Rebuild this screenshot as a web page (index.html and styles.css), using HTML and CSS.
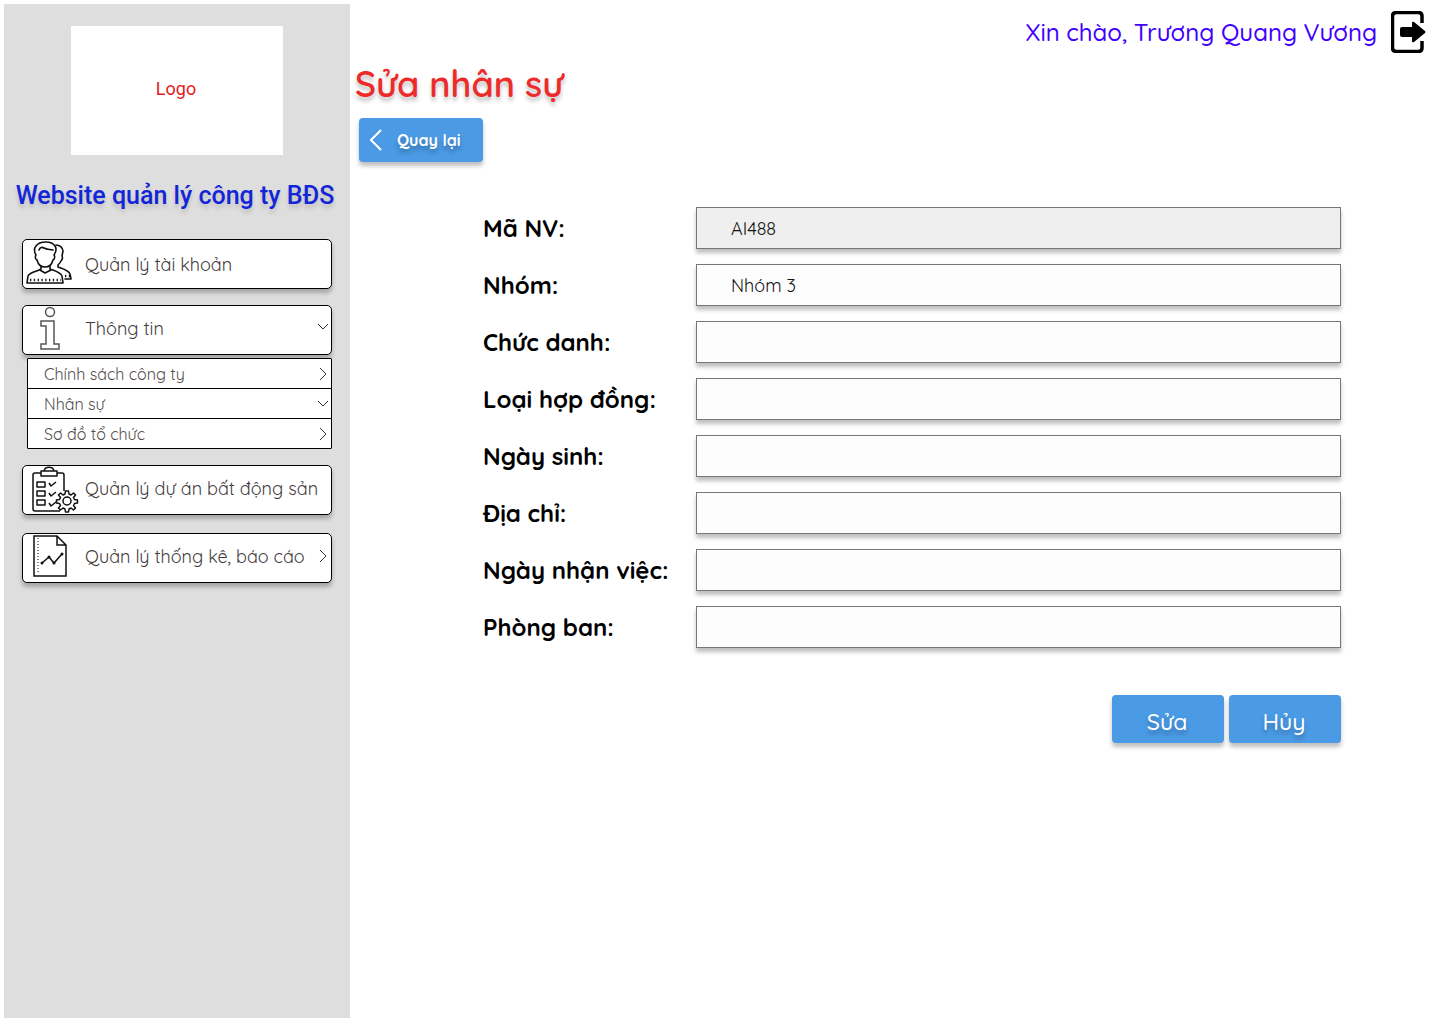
FILE: index.html
```
<!DOCTYPE html>
<html lang="vi">
<head>
<meta charset="utf-8">
<title>Sửa nhân sự</title>
<meta name="viewport" content="width=device-width, initial-scale=1">
<link rel="stylesheet" href="styles.css">
</head>
<body>
<div class="layout">
  <aside class="sidebar">
    <div class="logo">Logo</div>
    <p class="site-name">Website quản lý công ty BĐS</p>
    <nav class="menu">
      <a class="menu-item account" href="#">
        <svg class="menu-icon" viewBox="0 0 56 48" fill="none" stroke="#111" stroke-width="1.600" stroke-linecap="round" stroke-linejoin="round">
          <path d="M13 15c-2-3-2-7 0-9 2-3 6-4 10-4s7 1 9 4 1 6-1 9c1 1 1 4-1 5-1 4-4 7-8 7s-7-3-8-7c-2-1-2-4-1-5z"/>
          <path d="M16 10c1-3 3-3 5-2 3 2 6 1 9 2"/>
          <path d="M18 26v3c-5 3-11 3-13 7l-1 7h36l-1-7c-2-4-7-5-12-7v-3M17 30l5 3 6-3"/>
          <path d="M33 5c4 0 7 3 7 6l-1 5c1 2 0 4-1 5-1 2-2 3-3 4v2c5 2 10 3 12 7l1 5h-6"/>
          <path d="M7 40h31M42 36h5" stroke-width="2.500" stroke-dasharray="1.300 2.500" stroke-linecap="butt"/>
        </svg>
        <span>Quản lý tài khoản</span>
      </a>
      <div class="menu-group">
        <a class="menu-item" href="#">
          <svg class="menu-icon" viewBox="0 0 56 48" fill="none" stroke="#555" stroke-width="1.500">
            <circle cx="27" cy="6" r="4.500"/>
            <path d="M18 15h13v23h5v5H18v-5h5V20h-5z"/>
          </svg>
          <span>Thông tin</span>
          <svg class="chevron" viewBox="0 0 12 12"><path d="M1 2l5 5 5-5"/></svg>
        </a>
        <ul class="submenu">
          <li><a href="#">Chính sách công ty<svg class="chevron" viewBox="0 0 12 12"><path d="M3 0l6 6-6 6"/></svg></a></li>
          <li><a href="#">Nhân sự<svg class="chevron" viewBox="0 0 12 12"><path d="M1 3l5 5 5-5"/></svg></a></li>
          <li><a href="#">Sơ đồ tổ chức<svg class="chevron" viewBox="0 0 12 12"><path d="M3 0l6 6-6 6"/></svg></a></li>
        </ul>
      </div>
      <a class="menu-item" href="#">
        <svg class="menu-icon" viewBox="0 0 56 48" fill="none" stroke="#111" stroke-width="1.500" stroke-linejoin="round">
          <path d="M18 7h-6a2 2 0 0 0-2 2v34a2 2 0 0 0 2 2h25M34 7h5a2 2 0 0 1 2 2v16M18 5h3c1-5 9-5 10 0h3v5H18zM21 5h10"/>
          <path d="M14 16h8v5h-8zM14 25h8v5h-8zM14 34h8v5h-8zM26 17l2 3 5-4M26 27l2 3 5-4M26 37l2 3 5-4"/>
          <circle cx="44" cy="35" r="4"/>
          <path d="M42.500 25h3l.5 3 2 1 2.500-2 2 2-2 2.500 1 2 3 .5v3l-3 .5-1 2 2 2.500-2 2-2.500-2-2 1-.5 3h-3l-.5-3-2-1-2.500 2-2-2 2-2.500-1-2-3-.5v-3l3-.5 1-2-2-2.500 2-2 2.500 2 2-1z"/>
        </svg>
        <span>Quản lý dự án bất động sản</span>
      </a>
      <a class="menu-item reports" href="#">
        <svg class="menu-icon" viewBox="0 0 56 48" fill="none" stroke="#111" stroke-width="1.500">
          <path d="M11 2h23l9 9v31H11zM34 2v9h9"/>
          <path d="M15 4v36" stroke-width="1" stroke-dasharray="1 2"/>
          <path d="M19 29l7-6 5 6 8-9"/>
          <g fill="#111" stroke="none"><circle cx="19" cy="29" r="1.500"/><circle cx="26" cy="23" r="1.500"/><circle cx="31" cy="29" r="1.500"/><circle cx="39" cy="20" r="1.500"/></g>
        </svg>
        <span>Quản lý thống kê, báo cáo</span>
        <svg class="chevron" viewBox="0 0 12 12"><path d="M3 0l6 6-6 6"/></svg>
      </a>
    </nav>
  </aside>
  <main class="content">
    <header class="topbar">
      <span>Xin chào, Trương Quang Vương</span>
      <button class="logout" type="button" aria-label="Đăng xuất">
        <svg viewBox="0 0 36 42" width="36" height="42">
          <path d="M31 12V5q0-3.500-3.500-3.500h-22Q1.500 1.500 1.500 5v32q0 3.500 4 3.500h22q3.500 0 3.500-3.500v-7" fill="none" stroke="#000" stroke-width="3.500"/>
          <path d="M11 16h10v-4q0-2 2-1l11 9q1 1 0 2l-11 9q-2 1-2-1v-4H11q-2 0-2-2v-6q0-2 2-2z"/>
        </svg>
      </button>
    </header>
    <h1 class="page-title">Sửa nhân sự</h1>
    <button class="button back" type="button">
      <svg viewBox="0 0 12 22" width="12" height="22" fill="none" stroke="#fff" stroke-width="2"><path d="M11 1L1 11l10 10"/></svg>
      Quay lại
    </button>
    <form class="staff-form">
      <label for="code">Mã NV:</label><input id="code" value="AI488" readonly>
      <label for="team">Nhóm:</label><input id="team" value="Nhóm 3">
      <label for="title">Chức danh:</label><input id="title">
      <label for="contract">Loại hợp đồng:</label><input id="contract">
      <label for="birth">Ngày sinh:</label><input id="birth">
      <label for="address">Địa chỉ:</label><input id="address">
      <label for="start">Ngày nhận việc:</label><input id="start">
      <label for="department">Phòng ban:</label><input id="department">
      <div class="actions">
        <button class="button" type="submit">Sửa</button>
        <button class="button" type="reset">Hủy</button>
      </div>
    </form>
  </main>
</div>
</body>
</html>
```
FILE: styles.css
```
* {
  box-sizing: border-box;
}

body {
  margin: 0;
  background: #fff;
  color: #000;
  font-family: Quicksand, Lato, sans-serif;
}

.layout {
  display: grid;
  grid-template-columns: 346px 1fr;
  min-height: 100vh;
  padding: 4px 0 6px 4px;
}

.sidebar {
  padding: 22px 18px;
  background: #dedede;
}

.logo {
  display: grid;
  place-items: center;
  width: 212px;
  height: 129px;
  margin: 0 auto;
  padding: 0 2px 4px 0;
  background: #fff;
  color: #e51c23;
  font: 18px/24px Roboto, sans-serif;
}

.site-name {
  margin: 25px -16px 27px -20px;
  color: #1226d8;
  font: 500 25px/32px Roboto, sans-serif;
  text-align: center;
  text-shadow: 0 4px 4px rgba(0, 0, 0, 0.15);
}

.menu {
  display: grid;
  gap: 16px;
}

.menu-item {
  display: flex;
  align-items: center;
  height: 50px;
  padding: 0 2px 4px 0;
  border: 1px solid #000;
  border-radius: 5px;
  background: #fff;
  box-shadow: 0 4px 4px rgba(0, 0, 0, 0.25);
  color: #443c3c;
  font-size: 18px;
  font-weight: 400;
  text-decoration: none;
  white-space: nowrap;
}

.account {
  padding-bottom: 0;
}

.reports {
  margin-top: 2px;
}

.menu-icon {
  flex: none;
  align-self: flex-start;
  width: 56px;
  height: 48px;
  margin-right: 6px;
}

.chevron {
  flex: none;
  width: 12px;
  height: 12px;
  margin-left: auto;
  overflow: visible;
  fill: none;
  stroke: #333;
  stroke-width: 1;
}

.submenu {
  margin: 3px 0 0 5px;
  padding: 0;
  border: 1px solid #000;
  border-radius: 1px;
  background: #fff;
  list-style: none;
}

.submenu li + li {
  border-top: 1px solid #000;
}

.submenu a {
  display: flex;
  align-items: center;
  height: 29px;
  padding: 0 2px 0 16px;
  color: #554d4d;
  font-size: 16px;
  font-weight: 400;
  text-decoration: none;
}

.topbar {
  display: flex;
  align-items: center;
  justify-content: flex-end;
  gap: 14px;
  padding: 7px 13px 0 0;
  color: #4200ff;
  font-size: 24px;
  font-weight: 500;
  line-height: 42px;
}

.logout {
  display: flex;
  padding: 0;
  border: 0;
  background: none;
}

.page-title {
  margin: 7px 0 10px 5px;
  color: #ee2a2a;
  font-size: 36px;
  font-weight: 600;
  line-height: 48px;
  text-shadow: 0 4px 4px rgba(0, 0, 0, 0.25);
}

.button {
  width: 112px;
  height: 48px;
  padding: 4px 2px 0 0;
  border: 0;
  border-radius: 4px;
  background: #4a9ae5;
  box-shadow: 0 4px 4px rgba(0, 0, 0, 0.25);
  color: #fff;
  font: inherit;
  font-size: 23px;
  font-weight: 500;
  text-shadow: 0 4px 4px rgba(0, 0, 0, 0.25);
}

.back {
  display: flex;
  align-items: center;
  gap: 15px;
  width: 124px;
  height: 44px;
  margin-left: 9px;
  padding: 0 0 0 11px;
  font-size: 16px;
  font-weight: 700;
}

.staff-form {
  display: grid;
  grid-template-columns: 213px 1fr;
  row-gap: 15px;
  align-items: center;
  margin: 45px 99px 0 133px;
}

.staff-form label {
  font-size: 24px;
  font-weight: 700;
}

.staff-form input {
  width: 100%;
  min-width: 0;
  height: 42px;
  padding: 0 34px;
  border: 1px solid #777;
  border-radius: 0;
  background: #fdfdfd;
  box-shadow: 0 4px 4px rgba(0, 0, 0, 0.25);
  color: #111;
  font: inherit;
  font-size: 18px;
  font-weight: 400;
}

.staff-form input:read-only {
  background: #efefef;
}

.actions {
  display: flex;
  grid-column: 1 / -1;
  justify-content: flex-end;
  gap: 5px;
  margin-top: 32px;
}
```
